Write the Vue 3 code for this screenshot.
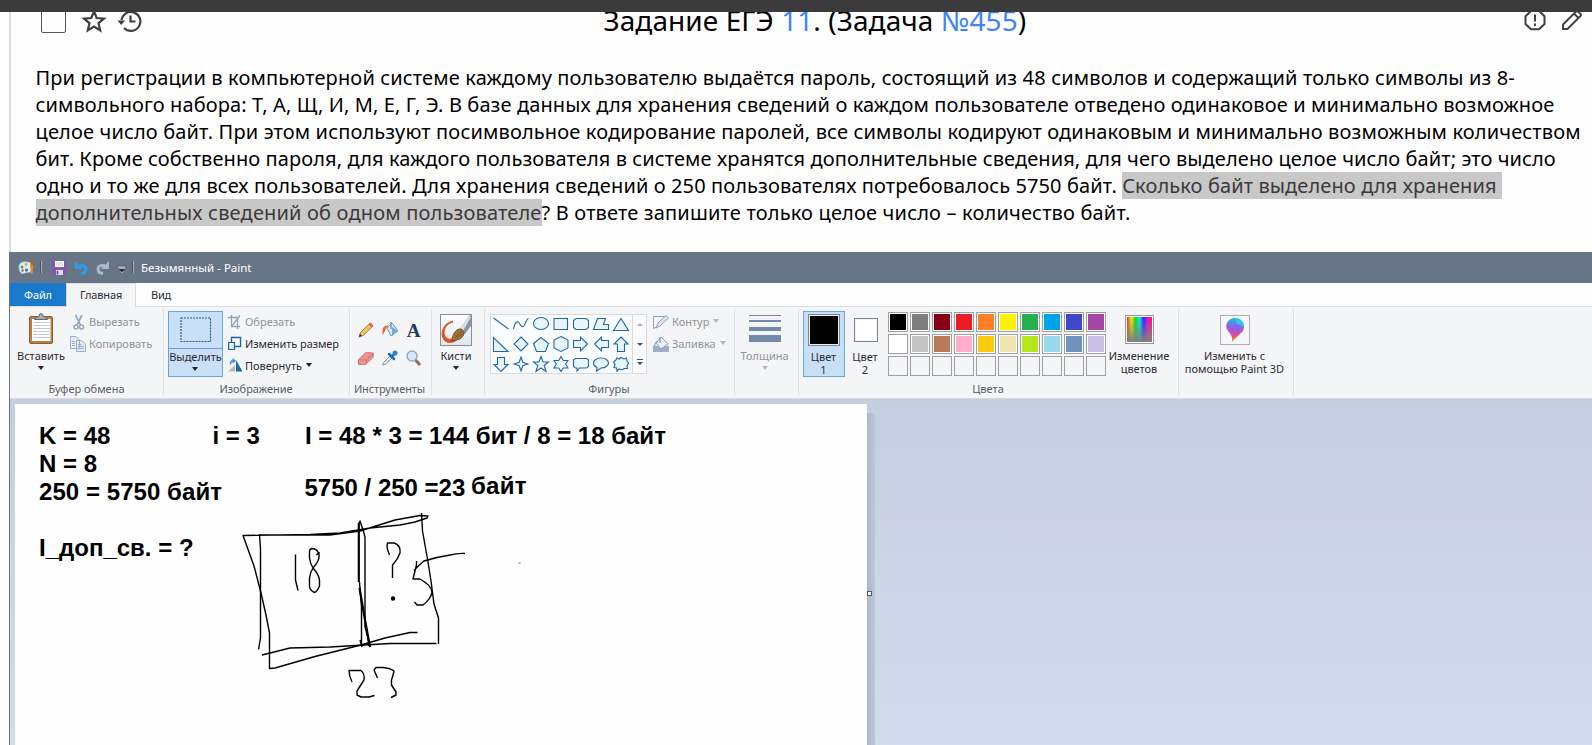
<script setup>
const lines = [
  { id: 1, text: 'При регистрации в компьютерной системе каждому пользователю выдаётся пароль, состоящий из 48 символов и содержащий только символы из 8-' },
  { id: 2, text: 'символьного набора: Т, А, Щ, И, М, Е, Г, Э. В базе данных для хранения сведений о каждом пользователе отведено одинаковое и минимально возможное' },
  { id: 3, text: 'целое число байт. При этом используют посимвольное кодирование паролей, все символы кодируют одинаковым и минимально возможным количеством' },
  { id: 4, text: 'бит. Кроме собственно пароля, для каждого пользователя в системе хранятся дополнительные сведения, для чего выделено целое число байт; это число' },
]
const palette = [
  '#000000', '#7f7f7f', '#880015', '#ed1c24', '#ff7f27', '#fff200', '#22b14c', '#00a2e8', '#3f48cc', '#a349a4',
  '#ffffff', '#c3c3c3', '#b97a57', '#ffaec9', '#ffc90e', '#efe4b0', '#b5e61d', '#99d9ea', '#7092be', '#c8bfe7',
  '', '', '', '', '', '', '', '', '', '',
]
const shapes = [
  'M1.5 3L16.5 14', 'M1.5 14C3 7 5 5.500 7 8S10.500 14 12.500 10S14.500 4 16.500 3.500', 'M9 2.500C13.500 2.500 16.500 5.300 16.500 8.500S13.500 14.500 9 14.500S1.500 11.700 1.500 8.500S4.500 2.500 9 2.500Z',
  'M2 3.500H15.500V14.500H2Z', 'M4 3.500H14L16.500 5.500V12.500L14 14.500H4L1.500 12.500V5.500Z', 'M5.500 3.500H13.500L11.500 9.500H16.500V14.500H1.500Z', 'M9 3.500L16.500 15.500H1.500Z',
  'M1.500 2.500V16.500H16Z', 'M9 2L16 9L9 16L2 9Z', 'M9 2.500L16.500 8.500L13.500 16.500H4.500L1.500 8.500Z',
  'M9 1.500L16 5V13L9 16.500L2 13V5Z', 'M1.500 5.500H8.500V2L15.500 9L8.500 16V12.500H1.500Z', 'M16.500 5.500H9.500V2L2.500 9L9.500 16V12.500H16.500Z', 'M9 2L16 9H12.500V16.500H5.500V9H2Z',
  'M5.500 2.500H12.500V9.500H16L9 16.500L2 9.500H5.500Z', 'M9 2L10.800 7.200L16 9L10.800 10.800L9 16L7.200 10.800L2 9L7.200 7.200Z', 'M9 1.500L11 7H16.500L12.200 10.500L14 16.500L9 13L4 16.500L5.800 10.500L1.500 7H7Z',
  'M9 1.500L11.300 5.500H16L13.700 9L16 13H11.300L9 16.500L6.700 13H2L4.300 9L2 5.500H6.700Z', 'M3.500 3.500H14.500L16.500 5V11.500L14.500 13H7.500L5 16V13H3.500L1.500 11.500V5Z',
  'M9 3C13.500 3 16.500 5.500 16.500 8S13.500 13 9 13L4.500 16L5 12.500C3 11.500 1.500 10 1.500 8C1.500 5.500 4.500 3 9 3Z',
  'M5 3L7 4L9 2.500L12 4L14.500 3L15 6L16.500 8L15 11L15.500 13.500L12 13.500L10 15L7 14L5 16L4.500 13L2 12.500L3 9.500L1.500 7L3.500 5.500Z',
]
</script>

<template>
  <div class="page">
    <div class="strip"></div>
    <section class="task">
      <header class="head">
        <div class="left-icons">
          <i class="check"></i>
          <svg class="star" width="26" height="26" viewBox="0 0 26 26"><path d="M13 3.500L15.700 10L23 10.600L17.500 15.200L19.200 22.500L13 18.600L6.800 22.500L8.500 15.200L3 10.600L10.300 10Z" fill="none" stroke="#404040" stroke-width="2.200" /></svg>
          <svg class="hist" width="26" height="26" viewBox="0 0 26 26"><path d="M4.500 12A9.500 9.500 0 1 1 7 20" fill="none" stroke="#404040" stroke-width="2.200" /><path d="M.5 12.500H8.200L4.200 17Z" fill="#404040" /><path d="M13.500 7.500V13.500H18.500" fill="none" stroke="#404040" stroke-width="2.200" /></svg>
        </div>
        <h1>Задание ЕГЭ <a>11</a>. (Задача <a>№455</a>)</h1>
        <div class="right-icons">
          <svg width="24" height="24" viewBox="0 0 24 24"><path d="M8 3H16L21.500 8.200V16L16 21.300H8L2.500 16V8.200Z" fill="none" stroke="#404040" stroke-width="2" /><path d="M12 6.500V13.500M12 15.500V18" stroke="#404040" stroke-width="2" /></svg>
          <svg width="24" height="24" viewBox="0 0 24 24"><path d="M3 21V16.500L15.500 4Q17 2.500 18.500 4L20.500 6Q21.500 7 20.500 8L7.500 21ZM14 5.500L18.500 10" fill="none" stroke="#404040" stroke-width="1.900" /></svg>
        </div>
      </header>
      <div class="text">
        <div v-for="l in lines" :key="l.id" class="line"><span :class="'l' + l.id">{{ l.text }}</span></div>
        <div class="line"><span class="l5">одно и то же для всех пользователей. Для хранения сведений о 250 пользователях потребовалось 5750 байт. <mark>Сколько байт выделено для хранения </mark></span></div>
        <div class="line"><span class="l6"><mark>дополнительных сведений об одном пользователе</mark>? В ответе запишите только целое число – количество байт.</span></div>
      </div>
    </section>

    <section class="paint">
      <div class="titlebar">
        <svg class="title-icons" width="125" height="31" viewBox="10 252 125 31">
          <path d="M19 268C18 263 23 261 27 262C32 262 34 266 32 270C30 274 26 272 25 273C22 275 19 272 19 268Z" fill="#d9edf7" stroke="#8bbfdd" stroke-width=".7" />
          <circle cx="22" cy="267" r="1.500" fill="#3dab48" /><circle cx="26" cy="264.500" r="1.400" fill="#e8a735" /><circle cx="26.500" cy="270" r="1.600" fill="#2876c6" /><circle cx="22.500" cy="270.500" r="1.200" fill="#dc4436" />
          <path d="M30 265H33.200L32.700 274H31Z" fill="#e88420" /><path d="M31 259.500L33.200 260V265H30.500Z" fill="#a96430" />
          <path d="M40.500 261V273M132.500 261V273" stroke="#465465" stroke-width="1" /><path d="M41.500 261V273M133.500 261V273" stroke="#a4afbb" stroke-width="1" />
          <path d="M52 261H66V275H54L52 273Z" fill="#8555b3" /><path d="M55 261H64V267H55Z" fill="#fff" /><path d="M56 263H63M56 265H63" stroke="#b8b8c8" stroke-width=".8" /><path d="M56 270H63V275H56Z" fill="#dfdfeb" /><path d="M57.500 271V274.500" stroke="#5c3b80" stroke-width="1.500" />
          <path d="M79 265.500H82C87.500 265.500 87.500 273 81 273.500" fill="none" stroke="#2b9de8" stroke-width="3" /><path d="M75 261V269H83Z" fill="#2b9de8" />
          <path d="M105 265.500H102C96.500 265.500 96.500 273 103 273.500" fill="none" stroke="#adb7c4" stroke-width="3" /><path d="M109 261V269H101Z" fill="#adb7c4" />
          <path d="M118.500 267H125" stroke="#fff" /><path d="M118 268.500H125.500L121.800 273Z" fill="#fff" /><path d="M118.500 266H125M118.500 269.200H125L121.800 272Z" fill="#111" stroke="#222" stroke-width=".4" />
        </svg>
        <span class="wname">Безымянный - Paint</span>
      </div>
      <nav class="tabs"><span class="file">Файл</span><span class="home">Главная</span><span class="view">Вид</span></nav>

      <div class="ribbon">
        <div class="group g1">
          <div class="body">
            <div class="big paste">
              <svg width="28" height="35" viewBox="27 312 28 35"><rect x="29.500" y="316.500" width="23" height="27" rx="1.500" fill="#b78046" stroke="#8d6035" /><path d="M32 319H50.500V341H32Z" fill="#fff" /><path d="M33 322.500H49.500M33 325.500H49.500M33 328.500H49.500M33 331.500H49.500M33 334.500H49.500M33 337.500H49.500" stroke="#bfcadb" /><path d="M34.500 319.500Q35 316.500 39 316.500Q39 313.500 41 313.500T43.500 316.500Q47 316.500 47.500 319.500Z" fill="#a9acae" stroke="#626970" /></svg>
              <span>Вставить</span><b class="arr"></b>
            </div>
            <div class="col">
              <div class="small dim"><svg width="19" height="18" viewBox="0 0 19 18"><path d="M5.500 2L10.500 12M12 2L7 12" stroke="#98a8bf" stroke-width="1.700" /><circle cx="6" cy="14" r="2" fill="none" stroke="#98a8bf" stroke-width="1.500" /><circle cx="11.500" cy="14" r="2" fill="none" stroke="#98a8bf" stroke-width="1.500" /></svg><span>Вырезать</span></div>
              <div class="small dim"><svg width="19" height="18" viewBox="0 0 19 18"><path d="M.5 1.500H6L9.500 5V13.500H.5ZM6.500 5.500H11.500L15.500 9V16.500H6.500Z" fill="#e5ecf5" stroke="#9cafc9" /><path d="M2 6.500H5M2 8.500H5M2 10.500H5M8 9.500H11.500M8 11.500H14M8 13.500H14" stroke="#9cafc9" /></svg><span>Копировать</span></div>
            </div>
          </div>
          <label>Буфер обмена</label>
        </div>

        <div class="group g2">
          <div class="body">
            <div class="select">
              <div class="seltop"><svg width="32" height="26"><rect x="1" y="1" width="29.500" height="23.500" fill="none" stroke="#17609f" stroke-width="1.200" stroke-dasharray="2 1" /></svg></div>
              <span>Выделить</span><b class="arr"></b>
            </div>
            <div class="col">
              <div class="small dim"><svg width="17" height="18" viewBox="0 0 17 18"><path d="M3.500 2V13.500H12M0 4.500H9.500V16M3.500 13.500L12 2.500" fill="none" stroke="#8fa3bf" stroke-width="1.300" /></svg><span>Обрезать</span></div>
              <div class="small"><svg width="17" height="18" viewBox="0 0 17 18"><path d="M3.500 2.500H12.500V11.500H3.500Z" fill="#fff" stroke="#1b65a3" stroke-width="1.400" /><path d="M.6 7.500H6.500V14.500H.6Z" fill="#e2f1fb" stroke="#1b65a3" stroke-width="1.200" /></svg><span class="tight">Изменить размер</span></div>
              <div class="small"><svg width="17" height="18" viewBox="0 0 17 18"><path d="M0 14.500H7V8Z" fill="#b5b9be" /><path d="M8 3V14.500H14.500Z" fill="#126cab" /><path d="M2.500 7.500Q2.500 3.800 5 3.800" fill="none" stroke="#398de3" stroke-width="1.500" /><path d="M4.500 1L8 3.700L4.500 6.500Z" fill="#398de3" /></svg><span>Повернуть</span><b class="arr"></b></div>
            </div>
          </div>
          <label>Изображение</label>
        </div>

        <div class="group g3">
          <div class="body tools">
            <svg width="18" height="18" viewBox="0 0 18 18"><path d="M2 16L3.500 11.500L12.500 2.500L15.500 5.500L6 14.500Z" fill="#f5c45e" stroke="#8c6a31" stroke-width=".8" /><path d="M11.500 3.500L13.500 1.500L16.500 4.500L14.500 6.500Z" fill="#d8696c" /><path d="M2 16L3 13L5 15Z" fill="#333" /></svg>
            <svg width="18" height="18" viewBox="0 0 18 18"><path d="M6 7L11 2L17 10L10 15Z" fill="#d7e9f5" stroke="#6898b8" /><path d="M11 6L17 10L11 15Z" fill="#73acd3" /><path d="M10 8V1" stroke="#718698" stroke-width="1.200" /><path d="M8 5C3 4 1 6 1.500 14L4 10L5 7Z" fill="#ed6332" /></svg>
            <svg width="18" height="18" viewBox="0 0 18 18"><text x="8.500" y="15.500" text-anchor="middle" class="toola">A</text></svg>
            <svg width="18" height="18" viewBox="0 0 18 18"><path d="M1.500 10.500L9 3.500L16.500 4L16 8.500L8.500 15.500H1.500Z" fill="#ef918f" stroke="#c06665" stroke-width=".8" /><path d="M2 11H9.500L16 5M9.500 11V15" fill="none" stroke="#c06665" stroke-width=".7" /></svg>
            <svg width="18" height="18" viewBox="0 0 18 18"><path d="M1.500 16L2.500 13.500L8.500 7.500L10.500 9.500L4 15.500Z" fill="#e7eef4" stroke="#73889e" stroke-width=".9" /><path d="M8 5L13 10M11 7.500L14 4.500" stroke="#1e6eae" stroke-width="2.500" stroke-linecap="round" /><circle cx="14" cy="4" r="2.500" fill="#2e83c6" /></svg>
            <svg width="18" height="18" viewBox="0 0 18 18"><path d="M10.500 11L15 16" stroke="#926e4e" stroke-width="3" /><circle cx="7" cy="7" r="5" fill="#d5e9fa" stroke="#9aa9b7" stroke-width="1.500" /></svg>
          </div>
          <label>Инструменты</label>
        </div>

        <div class="group g4">
          <div class="body center"><div class="big brush">
            <svg width="32" height="32" viewBox="0 0 32 32"><defs><linearGradient id="bg" x2="0" y2="1"><stop stop-color="#fff" /><stop offset="1" stop-color="#dce9ef" /></linearGradient></defs><rect x=".5" y=".5" width="31" height="31" fill="url(#bg)" stroke="#8b8d90" /><path d="M13 6.500C3 9 0 18 2.500 24C5 30 12 30 16 27L14 24C9 26 5 24 4.500 19C4.500 13 8 9.500 13 8.500Z" fill="#e84f20" /><path d="M20 15L29 2L31 1V12L25 20Z" fill="#8796a8" /><path d="M20 15L29 2L31 3L23 17Z" fill="#d5dde5" /><path d="M12 27C12 21 16 14 21 15C27 18 24 26 12 27Z" fill="#a3703a" stroke="#65401c" stroke-width=".8" /><path d="M15 24L22 17M17 24L24 19" stroke="#714b25" stroke-width=".8" /></svg>
            <span>Кисти</span><b class="arr"></b>
          </div></div>
        </div>

        <div class="group g5">
          <div class="body">
            <div class="gallery">
              <div class="shapes"><svg v-for="(s, i) in shapes" :key="i" width="18" height="18" viewBox="0 0 18 18"><path :d="s" :fill="i < 2 ? 'none' : '#e9f4f8'" stroke="#1f6aa6" stroke-width="1.100" /></svg></div>
              <div class="scroll"><b class="up"></b><b class="arr sc"></b><b class="arr sc more"></b></div>
            </div>
            <div class="col">
              <div class="small dim"><svg width="19" height="18" viewBox="0 0 19 18"><path d="M.5 3.500H12M.5 3.500V15.500L4 14" fill="none" stroke="#8ea2bd" /><path d="M3 15L5 10L13 2.500L15.500 5L7 13Z" fill="#dce5ef" stroke="#8ea2bd" /></svg><span>Контур</span><b class="arr"></b></div>
              <div class="small dim"><svg width="19" height="18" viewBox="0 0 19 18"><path d="M0 11H16V17H0Z" fill="#9eafc7" /><path d="M3 8L8 2L15 9L8 14Z" fill="#edf2f7" stroke="#8ea2bd" /><path d="M7 8V2M4 6L1 11" stroke="#8ea2bd" stroke-width="1.400" /></svg><span>Заливка</span><b class="arr"></b></div>
            </div>
          </div>
          <label>Фигуры</label>
        </div>

        <div class="group g6">
          <div class="body center"><div class="big dim thick">
            <svg width="32" height="32"><path d="M0 1.500H32" stroke="#7589aa" /><path d="M0 7H32" stroke="#7589aa" stroke-width="2" /><path d="M0 15H32" stroke="#7589aa" stroke-width="4" /><path d="M0 24.500H32" stroke="#7589aa" stroke-width="7" /></svg>
            <span>Толщина</span><b class="arr"></b>
          </div></div>
        </div>

        <div class="group g7">
          <div class="body">
            <div class="cbtn on"><i class="sw sw1"></i><span>Цвет<br>1</span></div>
            <div class="cbtn off"><i class="sw sw2"></i><span>Цвет<br>2</span></div>
            <div class="palette"><i v-for="(c, i) in palette" :key="i" :class="{ none: !c }" :style="c ? { backgroundColor: c } : null"></i></div>
            <div class="editc"><i class="rainbow"></i><span>Изменение<br>цветов</span></div>
          </div>
          <label>Цвета</label>
        </div>

        <div class="group g8">
          <div class="body center"><div class="editc p3">
            <svg width="30" height="30" viewBox="0 0 30 30"><defs><linearGradient id="pa" x1="0" y1="0" x2="0" y2="1"><stop stop-color="#26bde9" /><stop offset=".3" stop-color="#746fe4" /><stop offset=".6" stop-color="#bd4fcc" /><stop offset=".8" stop-color="#ee544e" /><stop offset="1" stop-color="#f5a72d" /></linearGradient></defs><rect x=".5" y=".5" width="29" height="29" fill="#f7f7f9" stroke="#adafb2" /><path d="M15 3C20 3 24 7 24 12C24 18 18 19 12 27Q13 21 9 17C3 11 8 3 15 3Z" fill="url(#pa)" /><path d="M15 3C21 3 24 7 24 12L17 9Z" fill="#21d7ed" opacity=".75" /><path d="M7 10Q8 17 12 20L12.500 25Q12 20 9 17Q6 14 7 10Z" fill="#f94e92" /></svg>
            <span>Изменить с<br>помощью Paint 3D</span>
          </div></div>
        </div>
      </div>

      <div class="work">
        <svg class="canvas" width="852" height="341" viewBox="15 404 852 341">
          <g class="ct">
            <text x="39" y="444">K = 48</text><text x="39" y="472">N = 8</text><text x="39" y="500" textLength="183">250 = 5750 байт</text><text x="39" y="556">I_доп_св. = ?</text>
            <text x="212.500" y="444">i = 3</text><text x="305" y="444">I = 48 * 3 = 144 бит / 8 = 18 байт</text><text x="304.500" y="496">5750 / 250 =23</text><text x="471" y="494" textLength="55.500">байт</text>
          </g>
          <g class="ink">
            <path d="M259.500 534.500L260.500 549V638L258.500 649.500" />
            <path d="M258.500 535H330L360 531L395 520L420 515.500L428 516L427 518L415 522L400 525L370 528L340 533L310 534.500L243 535.500L254 566L261 593L266 615L269.500 633V668.500L275 668L315 656.500L361 645L385 638L410 632.500H417.500" />
            <path d="M262 655L290 648L330 647L390 643.500H436.500" />
            <path d="M421.500 513L422.500 531L428 562L431 581L434 604L438.500 618V644" />
            <path class="bold" d="M358.800 582V523" /><path d="M358.500 524L360 521L363 530L365 537V627L370.500 647M359.500 582L361.500 607V646" /><path class="bold" d="M359.500 588L365 620L370 647" /><path d="M366 625L369 646M360 640L362 647" />
            <path d="M295.500 554.500V580L298 590.500M316.500 555L318.500 553Q317 549 312.500 548.500Q309.500 548.500 309.500 552V558Q310 563 313 568Q318.500 574 319.500 580V586Q317 592 314.500 592.500Q309.500 590 309.500 586V578Q310 573 313 568Q319 561 319 557V552" />
            <path d="M389.500 555Q386 547 387.500 543H394Q401 545 400 553Q398 559 392.500 565V578" /><circle cx="393" cy="598.500" r="1.500" class="dot" />
            <path d="M414 571Q417 568 416.500 561M414.500 570Q419 565 424 561Q437 557 450 555Q458 553 465 553.500M416.500 565L413 579H420Q431 585 432 592Q431 599 423 605H417L414.500 602" />
            <path d="M352 682Q349 676 349 670.500H361Q365 674 364 680L357 691V695L361 697H369L374.500 695.500M377.500 678L374 670L376 667.500H383Q390 668 394 671Q393 676 391.500 680L391.500 685L396 692V695L391 697.500" />
            <circle cx="519.500" cy="563" r=".15" />
          </g>
        </svg>
        <i class="shade"></i>
        <i class="handle"></i>
      </div>
    </section>
  </div>
</template>

<style>
body { overflow: hidden; }
</style>
<style scoped>
* { box-sizing: border-box; }
i, b { display: block; }
svg { display: block; flex: none; }
.page { width: 1592px; height: 745px; overflow: hidden; background: #fff; font-family: "Noto Sans", sans-serif; color: #000; }
.strip { height: 12px; background: #3b3b3b; }
.task { height: 240px; margin-left: 9px; border-left: 2px solid #dcdcdc; padding-left: 24.500px; overflow: hidden; background: #fefefe; }
.head { height: 52px; display: flex; align-items: flex-start; margin-left: 5.500px; overflow: hidden; }
.left-icons { display: flex; width: 562.500px; flex: none; }
.check { width: 25px; height: 29px; margin-top: -8px; border: 1px solid #555; border-radius: 2px; }
.star { margin: -4px 0 0 15px; }
.hist { margin: -4px 0 0 10px; }
h1 { margin: -11px 0 0; font-size: 28px; font-weight: 400; line-height: 38px; white-space: nowrap; width: 430px; flex: none; letter-spacing: .07px; }
h1 a { color: #4284f5; }
.right-icons { display: flex; gap: 13px; margin: -4px 0 0 489.500px; }
.text { font-size: 20px; }
.line { height: 27px; line-height: 27px; white-space: pre; }
.l1 { letter-spacing: .144px; }
.l2 { letter-spacing: .112px; }
.l3 { letter-spacing: .144px; }
.l4 { letter-spacing: .09px; }
.l5 { letter-spacing: .11px; }
.l6 { letter-spacing: .168px; }
mark { background: #c8c8c8; color: #3a3a3a; display: inline-block; height: 27px; vertical-align: top; white-space: pre; }

.paint { margin-left: 9px; border-left: 1px solid #677587; height: 493px; font-family: "Noto Sans", sans-serif; font-size: 11px; color: #2c2c34; }
.titlebar { height: 31px; background: #677587; display: flex; align-items: center; color: #fff; }
.wname { padding-left: 6px; white-space: nowrap; font-size: 11.500px; }
.tabs { height: 23px; background: #fefefe; display: flex; line-height: 24px; text-align: center; letter-spacing: -.15px; }
.file { width: 56px; background: #1979ca; color: #fff; }
.home { width: 70px; height: 24px; background: #f4f5f7; border: 1px solid #d9dbde; border-width: 1px 1px 0; position: relative; z-index: 1; line-height: 22px; }
.view { width: 50px; }
.ribbon { height: 93px; background: #f4f5f7; border-top: 1px solid #d9dbde; border-bottom: 1px solid #d9dadc; display: flex; padding-top: 2px; }
.group { height: 86px; border-right: 1px solid #dddfe2; display: flex; flex-direction: column; flex: none; white-space: nowrap; }
.body { height: 72px; display: flex; padding-top: 2px; flex: none; }
.center { justify-content: center; }
label { text-align: center; line-height: 16px; color: #5c5c64; display: block; padding-right: 1px; }
.g1 { width: 154px; } .g2 { width: 186px; } .g3 { width: 82px; } .g4 { width: 53px; } .g5 { width: 250px; } .g6 { width: 64px; } .g7 { width: 380px; } .g8 { width: 115px; }
.g1 label { padding: 0; }
.g3 label { letter-spacing: -.1px; padding-right: 2px; }
.arr { border: 3.5px solid transparent; border-top: 4px solid #222; border-bottom: 0; width: 0; height: 0; flex: none; }
.dim { color: #929298; }
.dim .arr { border-top-color: #b5b5ba; }
.big { display: flex; flex-direction: column; align-items: center; padding-top: 3px; }
.big span { line-height: 16px; }
.big svg + span { margin-top: 2px; }
.big .arr { margin-top: 2px; }
.paste { width: 60px; padding: 1px 0 0 2px; }
.paste svg + span { margin-top: 1px; }
.brush { margin-right: 4px; }
.thick { margin-right: 4px; }
.small { height: 22px; display: flex; align-items: center; }
.small span { margin-top: -2px; }
.small .arr { margin: -3px 0 0 4px; }
.tight { letter-spacing: -.08px; }
.select { width: 55px; height: 66px; margin: 0 5px 0 4px; border: 1px solid #66a3e0; background: #c9dff5; display: flex; flex-direction: column; align-items: center; }
.seltop { width: 53px; height: 37px; border-bottom: 1px solid #66a3e0; padding: 5px 0 0 11px; flex: none; }
.select span { line-height: 16px; }
.select .arr { margin: 2px 2px 0 0; }
.tools { display: grid; grid-template-columns: repeat(3, 18px); grid-auto-rows: 18px; gap: 10px 6px; padding: 12px 0 0 7px; }
.toola { font: bold 19px "Liberation Serif", serif; fill: #1c3a62; }
.gallery { width: 157px; height: 60px; margin: 3px 6px 0 5px; border: 1px solid #d9dbdf; background: #fafbfc; display: flex; }
.shapes { width: 141px; display: grid; grid-template-columns: repeat(7, 20px); grid-auto-rows: 19.750px; padding: 0 0 0 1px; }
.scroll { flex: 1; border-left: 1px solid #d9dbdf; display: grid; grid-template-rows: 19px 20px 19px; justify-items: center; align-items: center; }
.up { border: 3px solid transparent; border-bottom: 3px solid #b0b4bc; border-top: 0; width: 0; }
.sc { border-width: 3px 3px 0; border-top-color: #405268; }
.more { position: relative; }
.more::before { content: ""; position: absolute; left: -3px; top: -6px; width: 6px; height: 1px; background: #405268; }
.cbtn { width: 42px; height: 66px; display: flex; flex-direction: column; align-items: center; text-align: center; line-height: 13px; }
.g7 .body { padding-left: 4px; }
.cbtn.on { background: #c9dff5; border: 1px solid #66a3e0; }
.sw { border: 1px solid #808389; padding: 1px; background-clip: content-box; flex: none; }
.sw1 { width: 32px; height: 32px; margin-top: 2px; background-color: #000; box-shadow: inset 0 0 0 1px #e8f0f8; }
.sw2 { width: 24px; height: 24px; margin-top: 7px; background-color: #fff; }
.cbtn span { margin: 4px 1px 0 0; }
.cbtn.off span { margin: 8px 2px 0 0; }
.palette { display: grid; grid-template-columns: repeat(10, 20px); grid-auto-rows: 20px; gap: 2px; margin: 1px 0 0 1px; flex: none; height: 64px; }
.palette i { border: 1px solid #a0a0a0; padding: 1px; background-clip: content-box; box-shadow: inset 0 0 0 1px #fff; }
.palette i.none { box-shadow: none; }
.editc { display: flex; flex-direction: column; align-items: center; text-align: center; line-height: 13px; width: 66px; padding-top: 4px; }
.editc span { margin-top: 5px; }
.rainbow { width: 29px; height: 29px; border: 1px solid #999; padding: 1px; background: linear-gradient(transparent, #808080) content-box, linear-gradient(90deg, #f22, #fe0 17%, #1d1 34%, #0ee 50%, #22f 67%, #f0e 84%, #f23) content-box, #fff; flex: none; }
.p3 { width: 110px; margin-right: 3px; }
.p3 span { margin-top: 4px; }
.work { height: 346px; background: linear-gradient(#c5cde0, #d3dcec); padding: 5px 0 0 5px; display: flex; }
.canvas { background: #fefefe; }
.ct { font: bold 24px "Liberation Sans", Arial, sans-serif; fill: #000; }
.ink { fill: none; stroke: #000; stroke-width: 1.400; stroke-linejoin: round; }
.ink .bold { stroke-width: 2.200; }
.ink .dot { fill: #000; }
.shade { width: 8px; margin-top: 9px; background: linear-gradient(90deg, #aab6ca, #bcc7da); }
.handle { width: 5px; height: 5px; margin: 187px 0 0 -8px; border: 1px solid #555; background: #fff; }
</style>
